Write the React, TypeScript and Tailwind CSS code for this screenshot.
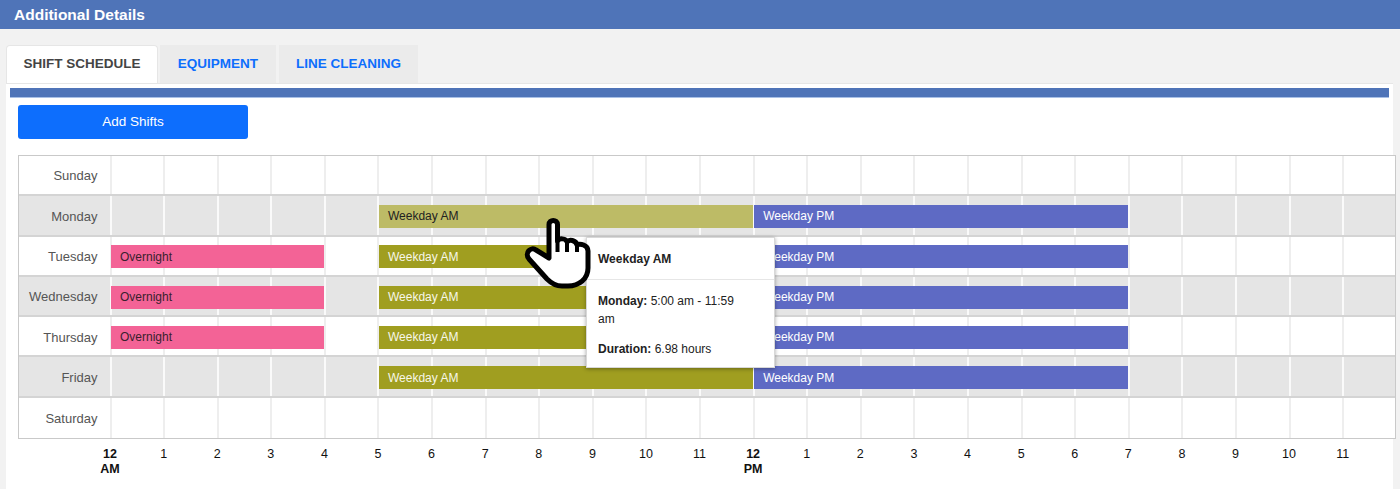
const hours = ["12 AM", "1", "2", "3", "4", "5", "6", "7", "8", "9", "10", "11", "12 PM", "1", "2", "3", "4", "5", "6", "7", "8", "9", "10", "11"]

const overnight = { label: "Overnight", className: "col-start-2 col-end-6 bg-[#f36396] text-[#3a1f2e]" }
const weekdayAm = { label: "Weekday AM", className: "col-start-7 col-end-14 bg-[#a09e20] text-[#f7f7e8]" }
const weekdayAmHover = { label: "Weekday AM", className: "col-start-7 col-end-14 bg-[#bdbb66] text-[#222]" }
const weekdayPm = { label: "Weekday PM", className: "col-start-14 col-end-21 bg-[#5e6ac4] text-white" }

const days = [
  { name: "Sunday", bars: [] },
  { name: "Monday", bars: [weekdayAmHover, weekdayPm] },
  { name: "Tuesday", bars: [overnight, weekdayAm, weekdayPm] },
  { name: "Wednesday", bars: [overnight, weekdayAm, weekdayPm] },
  { name: "Thursday", bars: [overnight, weekdayAm, weekdayPm] },
  { name: "Friday", bars: [weekdayAm, weekdayPm] },
  { name: "Saturday", bars: [] },
]

function HandCursor() {
  return (
    <svg className="absolute left-[520px] top-[212px] z-30" width="75" height="80" viewBox="520 212 75 80" fill="none">
      <path
        d="M549 258V224.500C549 219 557.500 219 557.500 224.500V241C559 238 566 238 567 242C569 239 576 240 577 245C580 243 588 245 588 251V268C588 279 579 286 568 286H562C555 286 551 283 547 279L529 259C524 253 531 246 536 250Z"
        fill="white"
        stroke="black"
        strokeWidth="5"
        strokeLinejoin="round"
      />
      <path d="M557.500 241V252M567 242V252M577 245V252" stroke="black" strokeWidth="4" />
    </svg>
  )
}

export default function App() {
  return (
    <div className="relative h-[489px] w-[1400px] overflow-hidden bg-[#f2f2f2] font-['Liberation_Sans',Arial,sans-serif]">
      <div className="flex h-[29px] items-center bg-[#4f74b8] pl-[14px] text-[15.5px] font-bold text-white">Additional Details</div>

      <div className="ml-[6px] mt-4 flex h-[38px] gap-[2px] text-[13.5px] font-bold">
        <div className="flex w-[152px] items-center justify-center rounded-t border border-b-0 border-[#e6e6e6] bg-white pb-px text-[#444]">SHIFT SCHEDULE</div>
        <div className="flex w-[116px] items-center justify-center bg-[#ebebeb] text-[#0d6efd]">EQUIPMENT</div>
        <div className="ml-px flex w-[139px] items-center justify-center bg-[#ebebeb] text-[#0d6efd]">LINE CLEANING</div>
      </div>

      <div className="ml-[6px] h-[406px] w-[1387px] border-t border-[#e6e6e6] bg-white pl-1 pt-1">
        <div className="h-[10px] w-[1379px] border-b border-[#a9c0e6] bg-[#4f74b8]"></div>
        <button className="ml-2 mt-[7px] h-[34px] w-[230px] rounded-[3px] bg-[#0d6efd] text-[13.5px] text-white">Add Shifts</button>

        <div className="ml-2 mt-4 w-[1378px] overflow-hidden border border-[#c9c9c9]">
          {days.map((day, i) => (
            <div
              key={day.name}
              className={
                i % 2 === 1
                  ? "grid h-[40.3px] grid-cols-[90.5px_repeat(24,53.6px)] border-b-2 border-[#d4d4d4] bg-[#e5e5e5] last:border-b-0"
                  : "grid h-[40.3px] grid-cols-[90.5px_repeat(24,53.6px)] border-b-2 border-[#d4d4d4] bg-white last:border-b-0"
              }
            >
              <div className="col-start-1 row-start-1 mt-0.5 self-center pr-3 text-right text-[13px] text-[#555]">{day.name}</div>
              {hours.map((_, h) => (
                <div
                  key={h}
                  style={{ gridColumnStart: h + 2 }}
                  className={i % 2 === 1 ? "row-start-1 border-l-2 border-white/80" : "row-start-1 border-l-2 border-[#eeeeee]"}
                ></div>
              ))}
              {day.bars.map((bar) => (
                <div
                  key={bar.label}
                  className={`${bar.className} row-start-1 z-10 ml-[1.5px] mt-0.5 flex h-[23px] items-center self-center pl-[9px] text-[12px]`}
                >
                  {bar.label}
                </div>
              ))}
            </div>
          ))}
        </div>

        <div className="ml-2 mt-2 grid w-[1378px] grid-cols-[91px_repeat(24,53.6px)] px-px text-[12.5px] leading-[14.5px] text-[#111]">
          {hours.map((hour, h) => (
            <div key={h} style={{ gridColumnStart: h + 2 }} className="flex w-0 justify-center">
              <span className={hour.includes(" ") ? "w-6 shrink-0 text-center font-bold" : "shrink-0"}>{hour}</span>
            </div>
          ))}
        </div>
      </div>

      <div className="absolute left-[586px] top-[237px] z-20 h-[131px] w-[189px] border border-[#d8d8d8] bg-white text-[12px] text-[#222] shadow-[0_1px_4px_rgba(0,0,0,0.35)]">
        <div className="flex h-[42px] items-center border-b border-[#e6e6e6] pl-[11px] font-bold">Weekday AM</div>
        <div className="pl-[11px] pr-8 pt-3 leading-[18px]">
          <p><b>Monday:</b> 5:00 am - 11:59 am</p>
          <p className="mt-3"><b>Duration:</b> 6.98 hours</p>
        </div>
      </div>

      <HandCursor />
    </div>
  )
}
